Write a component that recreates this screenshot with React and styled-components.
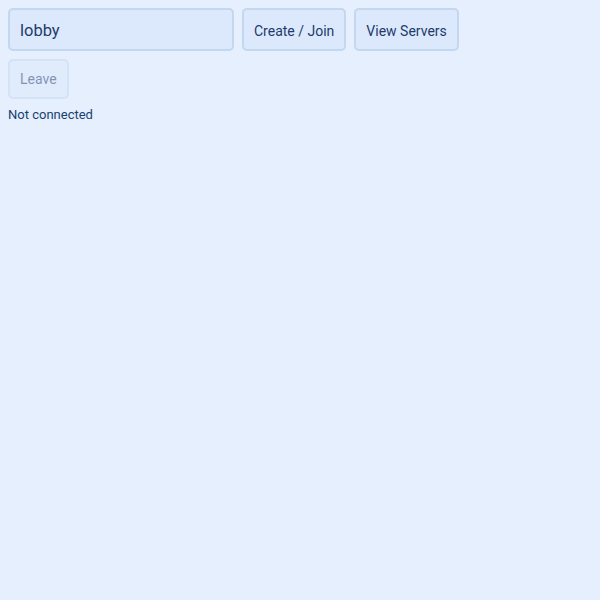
import React from "react";
import styled, { createGlobalStyle } from "styled-components";

const Global = createGlobalStyle`
  html, body { margin: 0; background: #e6effd; }
  body { padding: 8px; font-family: Roboto, "Liberation Sans", sans-serif; color: #1e3a6b; }
`;

const Page = styled.div`
  display: flex;
  flex-direction: column;
`;

const Row = styled.div`
  display: flex;
  gap: 8px;
  align-items: center;
  margin-bottom: ${(p) => p.$gap || 0}px;
`;

const Input = styled.input`
  box-sizing: border-box;
  width: 226px;
  height: 43px;
  padding: 1px 10px 0;
  font-family: inherit;
  font-size: 16.5px;
  color: #1e3a6b;
  background: #dce9fc;
  border: 2px solid #c3d7f1;
  border-radius: 5px;
  outline: none;
`;

const Button = styled.button`
  box-sizing: border-box;
  height: ${(p) => (p.$small ? 40 : 43)}px;
  padding: ${(p) => (p.$small ? 0 : 2)}px 10px 0;
  font-family: inherit;
  font-size: 14px;
  color: #1e3a6b;
  background: #dce9fc;
  border: 2px solid #c3d7f1;
  border-radius: 5px;
  cursor: pointer;
  &:disabled {
    opacity: 0.5;
    cursor: default;
  }
`;

const Status = styled.div`
  font-size: 13px;
  line-height: 16px;
  color: #1a3f70;
`;

export default function App() {
  return (
    <>
      <Global />
      <Page>
        <Row $gap={8}>
          <Input defaultValue="lobby" />
          <Button>Create / Join</Button>
          <Button>View Servers</Button>
        </Row>
        <Row $gap={8}>
          <Button $small disabled>Leave</Button>
        </Row>
        <Status>Not connected</Status>
      </Page>
    </>
  );
}
